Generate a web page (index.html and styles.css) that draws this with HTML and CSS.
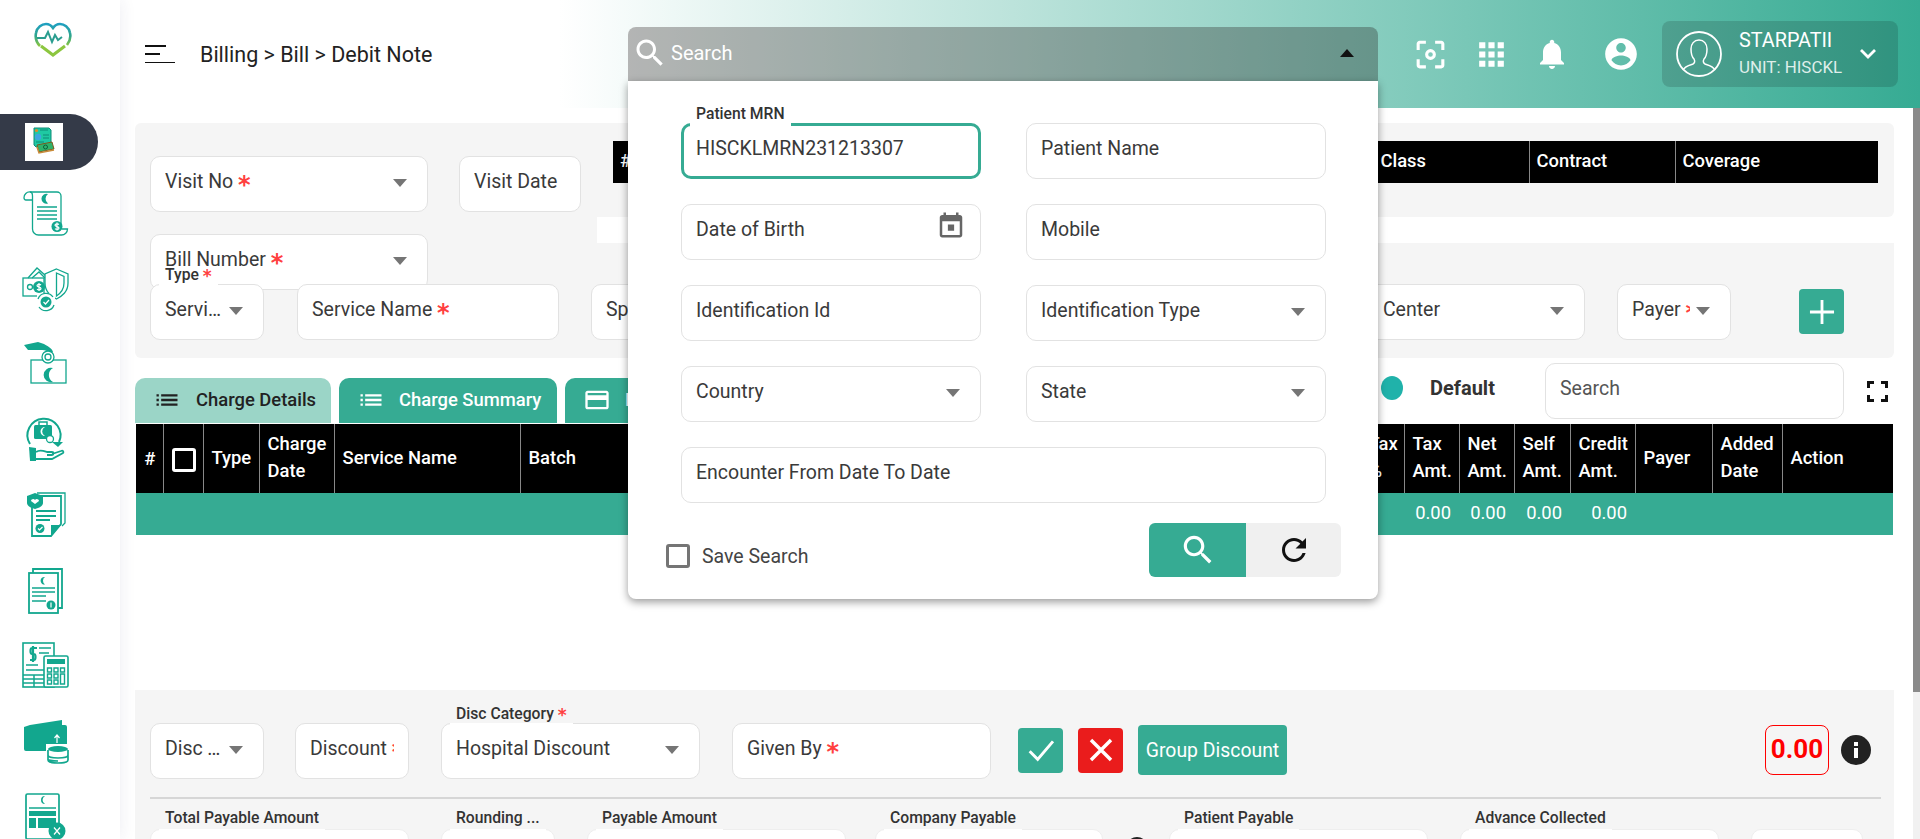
FILE: index.html
```html
<!DOCTYPE html>
<html lang="en">
<head>
<meta charset="utf-8">
<title>Billing - Debit Note</title>
<link rel="stylesheet" href="styles.css">
</head>
<body>
<svg class="sprite" aria-hidden="true">
  <symbol id="i-search" viewBox="0 0 24 24"><path d="M15.5 14h-.79l-.28-.27C15.41 12.59 16 11.11 16 9.5 16 5.91 13.09 3 9.5 3S3 5.91 3 9.5 5.91 16 9.5 16c1.61 0 3.09-.59 4.23-1.57l.27.28v.79l5 4.99L20.49 19l-4.99-5zm-6 0C7.01 14 5 11.99 5 9.5S7.01 5 9.5 5 14 7.01 14 9.5 11.99 14 9.5 14z"/></symbol>
  <symbol id="i-list" viewBox="0 0 24 24"><path d="M3 13h2v-2H3v2zm0 4h2v-2H3v2zm0-8h2V7H3v2zm4 4h14v-2H7v2zm0 4h14v-2H7v2zM7 7v2h14V7H7z"/></symbol>
</svg>
<div class="app">
  <aside class="sidebar">
    <svg class="logo" viewBox="0 0 38 35" fill="none">
      <defs><linearGradient id="lg" x1="0" y1="0" x2="0" y2="1"><stop offset="0" stop-color="#1f9fc0"/><stop offset=".55" stop-color="#2fa58c"/><stop offset="1" stop-color="#8cc63f"/></linearGradient></defs>
      <path d="M6 24C2 20 1 16 2 11 3 5 8 2 12 2c3 0 5 1 7 4 2-3 4-4 7-4 4 0 9 3 10 9 1 4 0 8-3 12" stroke="url(#lg)" stroke-width="2.6"/>
      <path d="M3 16h8l3-6 4 10 3-7 3 5 4-3" stroke="#2a9d8f" stroke-width="2"/>
      <path d="M7 24l12 9 12-9" stroke="#8cc63f" stroke-width="3"/>
    </svg>
    <div class="nav-active">
      <span class="nav-active-box">
        <svg viewBox="0 0 38 38" class="active-ic">
          <path d="M9 5h15l2 2v15l-15 2-2-2z" fill="#1fc9a3" stroke="#0f8b76"/>
          <circle cx="11.500" cy="7.500" r="1.600" fill="#e08a2c"/>
          <circle cx="13" cy="14" r="3.200" fill="#3da5e0"/>
          <path d="M15 7h8M18 12h6M18 15h6M11 19h8" stroke="#0f8b76" fill="none"/>
          <path d="M12 22l15-3 2 7-15 3z" fill="#2fb36a" stroke="#7a5a1e"/>
          <path d="M12 24l2 6 15-3" fill="none" stroke="#c98b3a" stroke-width="1.500"/>
          <circle cx="20.500" cy="24" r="2" fill="none" stroke="#0b5f3a"/>
        </svg>
      </span>
    </div>
    <nav class="nav-list">
      <svg class="nav-ic" viewBox="0 0 48 48">
        <path d="M8 3h27a4 4 0 0 1 4 4v29"/><path d="M8 3a5.500 5.500 0 0 0-6 5.500c0 1.500 1 2.500 2 2.500h6"/><path d="M8 3c2 0 2.500 2 2.500 4v33a6 6 0 0 0 6 6h23a6 6 0 0 0 6-6h-6"/>
        <path class="f" d="M26 5a5 5 0 1 0 0 9.500 5.800 5.800 0 0 1 0-9.500z"/>
        <path d="M15 18h20M15 22h20M15 26h20M15 30h20"/>
        <circle class="f" cx="35" cy="37.500" r="5.500"/><path class="ws" d="M37 35.500c-1-1-4-.8-4 .8s4 1 4 2.800-3 1.600-4 .6M35 33.500v8"/>
      </svg>
      <svg class="nav-ic" viewBox="0 0 48 48">
        <path d="M6 13L15 3l9 8M10 13l7-6 6 6"/><rect x="1" y="13" width="21" height="18"/>
        <circle cx="8" cy="22" r="2.500"/><circle class="f" cx="17" cy="22" r="6"/><path class="ws" d="M19 20c-1-1-4-.8-4 .8s4 1 4 2.800-3 1.600-4 .6M17 18v8"/>
        <path fill="#fff" d="M34.500 4L46 9v9c0 9-6 13-11.500 16C29 31 23 27 23 18V9z"/><path d="M34.500 8L42 11.500V18c0 6-3 10-7.500 13zM34.500 8v23"/>
        <path fill="#fff" stroke="none" d="M15 28h18v18H15z"/><path d="M16 34a8.500 8.500 0 0 1 15-2M32 40a8.500 8.500 0 0 1-15 2"/><circle class="f" cx="24" cy="37" r="5.500"/><path class="ws" d="M21.500 37l2 2 3.500-4"/>
      </svg>
      <svg class="nav-ic" viewBox="0 0 48 48">
        <rect x="9" y="20" width="35" height="23"/>
        <path class="f" d="M2 5L16 2l6 2c3 2 8 4 9 8h-5c-2-2-5-2-8-2H6z"/>
        <circle fill="#fff" stroke="#12a78e" cx="26" cy="17" r="6"/><circle cx="26" cy="17" r="3"/>
        <path class="f" d="M31 28a7.300 7.300 0 1 0 0 14 8 8 0 0 1 0-14z"/>
      </svg>
      <svg class="nav-ic" viewBox="0 0 48 48">
        <path stroke-width="2" d="M8 28A16.500 16.500 0 1 1 37 26"/><path class="f" d="M30 26h11l-5 5z"/>
        <rect class="f" x="12" y="9" width="18" height="14" rx="1.500"/><path d="M17 9V6h8v3" stroke-width="1.500"/>
        <path class="wf" d="M23 11a4.500 4.500 0 1 0 0 9 5 5 0 0 1 0-9z"/>
        <circle fill="#fff" cx="28" cy="23" r="3.500"/>
        <path class="f" d="M7 31l7 1v13H8z"/><path stroke-width="1.800" d="M14 36c4-3 8-1 11 0h5c2 0 2 3 0 3h-5M30 38l9-3c2-1 3 1 2 2l-11 6H14"/>
      </svg>
      <svg class="nav-ic" viewBox="0 0 48 48">
        <path d="M15 2h28v30l-3 3"/><path stroke-width="1.800" d="M12 5h27v28L29 45H10V14"/>
        <path class="f" d="M29 45V34h10z"/>
        <path stroke-width="1.800" d="M14 20h20M14 25h20M14 29h14"/>
        <path class="f" d="M13 2l8 3v7c0 3-4 5-8 6-4-1-8-3-8-6V5z"/><path class="wf" d="M13 13l-4-3c0-2 3-3 4-1 1-2 4-1 4 1z"/>
        <circle class="f" cx="18" cy="37.500" r="4.500"/><path class="ws" d="M16 37.500l1.500 1.500 3-3"/>
      </svg>
      <svg class="nav-ic" viewBox="0 0 48 48">
        <path stroke-width="1.800" d="M11 6V2h29v39h-4"/><rect x="7" y="6" width="29" height="40" fill="#fff" stroke-width="1.800"/>
        <path class="f" d="M23 10a3.800 3.800 0 1 0 0 7.500 4.500 4.500 0 0 1 0-7.500z"/>
        <path stroke-width="1.600" d="M10 21h23M10 25h23M10 29h14M10 34h14"/>
        <circle class="f" cx="29" cy="38" r="4.500"/><path class="ws" d="M29 35.500v5"/>
      </svg>
      <svg class="nav-ic" viewBox="0 0 48 48">
        <rect x="1" y="1" width="31" height="44" stroke-width="1.600"/>
        <path stroke-width="2.200" d="M15 6h-5c-2 0-2 6 0 6h2c2 0 2 6 0 6H8M11 4v16"/>
        <path stroke-width="1.500" d="M17 6h12M17 11h10M4 23h12M4 28h20"/>
        <path stroke-width="1.500" d="M1 33h21M1 37h21M1 41h21M12 33v12"/>
        <rect x="22" y="14" width="24" height="31" rx="1.500" fill="#fff" stroke-width="1.600"/>
        <rect class="f" x="25" y="17" width="18" height="5"/>
        <path stroke-width="1.400" d="M25.500 26h4v4h-4zM32 26h4v4h-4zM38.500 26h4v4h-4zM25.500 32h4v4h-4zM32 32h4v4h-4zM38.500 32h4v10h-4zM25.500 38h4v4h-4zM32 38h4v4h-4z"/>
      </svg>
      <svg class="nav-ic" viewBox="0 0 48 48">
        <path class="f" d="M8 7L40 2v5h3a2 2 0 0 1 2 2v24H4a2 2 0 0 1-2-2V9z"/>
        <path class="ws" d="M35 25v-8M32.500 20l2.500-3 2.500 3"/>
        <path fill="#fff" stroke="none" d="M24 26h24v20H24z"/>
        <ellipse class="f" cx="36" cy="31" rx="10" ry="3"/><path stroke-width="1.700" d="M26 32v10c0 2 4 3 10 3s10-1 10-3V32M26 37c0 2 4 3 10 3s10-1 10-3M26 41c0 1 4 2 10 2"/>
      </svg>
      <svg class="nav-ic" viewBox="0 0 48 48">
        <rect x="4" y="1" width="33" height="45" rx="1.500" stroke-width="1.700"/>
        <path class="f" d="M23 3a3.800 3.800 0 1 0 0 8 4.500 4.500 0 0 1 0-8z"/>
        <path stroke-width="1.500" d="M7 15h27"/>
        <path class="f" d="M7 18h27v5H7zM7 25h7v10H7zM16 25h18v10H16z"/>
        <circle class="f" cx="35" cy="38" r="8.500" stroke="#fff"/><path class="ws" stroke-width="2" d="M32 34.500l6 7M38 34.500l-6 7"/>
      </svg>
    </nav>
  </aside>

  <div class="main">
    <header class="topbar">
      <div class="hamburger"><span class="ham-a"></span><span class="ham-b"></span><span class="ham-c"></span></div>
      <div class="crumbs">Billing &gt; Bill &gt; Debit Note</div>
      <div class="global-search">
        <div class="search-bar">
          <svg class="search-ic" viewBox="0 0 24 24"><use href="#i-search"/></svg>
          <span class="search-text">Search</span>
          <span class="caret-up"></span>
        </div>
        <div class="search-panel">
          <div class="search-grid">
            <div class="field focus"><label class="float">Patient MRN</label><span class="val">HISCKLMRN231213307</span></div>
            <div class="field"><span class="val">Patient Name</span></div>
            <div class="field"><span class="val">Date of Birth</span>
              <svg class="cal" viewBox="0 0 24 24"><path d="M19 4h-1V2h-2v2H8V2H6v2H5c-1.110 0-1.990.9-1.990 2L3 20c0 1.100.89 2 2 2h14c1.100 0 2-.9 2-2V6c0-1.100-.9-2-2-2zm0 16H5V9h14v11zM9.500 11.500h5v5h-5z"/></svg>
            </div>
            <div class="field"><span class="val">Mobile</span></div>
            <div class="field"><span class="val">Identification Id</span></div>
            <div class="field"><span class="val">Identification Type</span><span class="caret"></span></div>
            <div class="field"><span class="val">Country</span><span class="caret"></span></div>
            <div class="field"><span class="val">State</span><span class="caret"></span></div>
            <div class="field span-2"><span class="val">Encounter From Date To Date</span></div>
          </div>
          <div class="search-foot">
            <label class="save"><span class="save-box"></span><span>Save Search</span></label>
            <div class="foot-btns">
              <button class="btn-go"><svg viewBox="0 0 24 24"><use href="#i-search"/></svg></button>
              <button class="btn-reset"><svg viewBox="0 0 24 24"><path d="M17.650 6.350C16.200 4.900 14.210 4 12 4c-4.420 0-7.990 3.580-7.990 8s3.570 8 7.990 8c3.730 0 6.840-2.550 7.730-6h-2.080c-.82 2.330-3.040 4-5.650 4-3.310 0-6-2.690-6-6s2.690-6 6-6c1.660 0 3.140.69 4.220 1.780L13 11h7V4l-2.350 2.350z"/></svg></button>
            </div>
          </div>
        </div>
      </div>
      <div class="top-icons">
        <svg class="ti ti-focus" viewBox="0 0 24 24"><path d="M5 15H3v4c0 1.100.9 2 2 2h4v-2H5v-4zM5 5h4V3H5c-1.100 0-2 .9-2 2v4h2V5zm14-2h-4v2h4v4h2V5c0-1.100-.9-2-2-2zm0 16h-4v2h4c1.100 0 2-.9 2-2v-4h-2v4z"/><path fill-rule="evenodd" d="M12 8.500a3.500 3.500 0 1 0 0 7 3.500 3.500 0 0 0 0-7zm0 2a1.500 1.500 0 1 1 0 3 1.500 1.500 0 0 1 0-3z"/></svg>
        <svg class="ti ti-apps" viewBox="0 0 24 24"><path d="M4 8h4V4H4v4zm6 12h4v-4h-4v4zm-6 0h4v-4H4v4zm0-6h4v-4H4v4zm6 0h4v-4h-4v4zm6-10v4h4V4h-4zm-6 4h4V4h-4v4zm6 6h4v-4h-4v4zm0 6h4v-4h-4v4z"/></svg>
        <svg class="ti ti-bell" viewBox="0 0 24 24"><path d="M12 22c1.100 0 2-.9 2-2h-4c0 1.100.89 2 2 2zm6-6v-5c0-3.070-1.640-5.640-4.500-6.320V4c0-.83-.67-1.500-1.500-1.500s-1.500.67-1.500 1.500v.68C7.630 5.360 6 7.920 6 11v5l-2 2v1h16v-1l-2-2z"/></svg>
        <svg class="ti ti-acct" viewBox="0 0 24 24"><path d="M12 2C6.480 2 2 6.480 2 12s4.480 10 10 10 10-4.480 10-10S17.520 2 12 2zm0 3c1.660 0 3 1.340 3 3s-1.340 3-3 3-3-1.340-3-3 1.340-3 3-3zm0 14.200c-2.500 0-4.710-1.280-6-3.220.03-1.990 4-3.080 6-3.080 1.990 0 5.970 1.090 6 3.080-1.290 1.940-3.500 3.220-6 3.220z"/></svg>
      </div>
      <div class="user-box">
        <svg class="avatar" viewBox="0 0 46 46" fill="none" stroke="#fff"><circle cx="23" cy="23" r="22" stroke-width="1.800"/><path stroke-width="1.500" d="M7 39c2-4 7-5 10-6 2-1 2-3 1-5-2-2-3-6-3-10 0-5 3-9 8-9s8 4 8 9c0 4-1 8-3 10-1 2-1 4 1 5 3 1 8 2 10 6"/></svg>
        <div class="user-text"><div class="user-name">STARPATII</div><div class="user-unit">UNIT: HISCKL</div></div>
        <svg class="chev" viewBox="0 0 18 12" fill="none" stroke="#fff" stroke-width="2.800"><path d="M2 2l7 7 7-7"/></svg>
      </div>
    </header>

    <div class="content">
      <section class="visit-section">
        <div class="visit-col">
          <div class="visit-row">
            <div class="field w-visit"><span class="val">Visit No <b class="req">*</b></span><span class="caret"></span></div>
            <div class="field w-date"><span class="val">Visit Date</span></div>
          </div>
          <div class="field w-visit bill"><span class="val">Bill Number <b class="req">*</b></span><span class="caret"></span></div>
        </div>
        <div class="visit-table-wrap">
          <table class="dark-table visit-table">
            <colgroup><col class="vc-a"><col class="vc-b"><col class="vc-c"><col class="vc-d"><col class="vc-e"></colgroup>
            <tr><th>#</th><th>Encounter</th><th>Class</th><th>Contract</th><th>Coverage</th></tr>
          </table>
        </div>
      </section>

      <section class="service-panel">
        <div class="field w-type"><label class="float">Type <b class="req">*</b></label><span class="val ell">Service</span><span class="caret"></span></div>
        <div class="field w-service"><span class="val">Service Name <b class="req">*</b></span></div>
        <div class="field w-spec"><span class="val">Specialization</span></div>
        <div class="field w-doc"><span class="val">Doctor</span></div>
        <div class="field w-center"><span class="val">Cost&nbsp; Center</span><span class="caret"></span></div>
        <div class="field w-type"><span class="val clip">Payer <b class="req">*</b></span><span class="caret"></span></div>
        <button class="btn-add"><svg viewBox="0 0 24 24" fill="none" stroke="#fff" stroke-width="2"><path d="M12 3.500v17M3.500 12h17"/></svg></button>
      </section>

      <div class="tool-row">
        <button class="tab tab-light"><svg viewBox="0 0 24 24"><use href="#i-list"/></svg><span>Charge Details</span></button>
        <button class="tab tab-summary"><svg viewBox="0 0 24 24"><use href="#i-list"/></svg><span>Charge Summary</span></button>
        <button class="tab tab-third"><svg viewBox="0 0 24 24"><path d="M20 4H4c-1.110 0-1.990.89-1.990 2L2 18c0 1.110.89 2 2 2h16c1.110 0 2-.89 2-2V6c0-1.110-.89-2-2-2zm0 14H4v-6h16v6zm0-10H4V6h16v2z"/></svg><span>Payment</span></button>
        <div class="tool-right">
          <span class="dot"></span>
          <span class="default-text">Default</span>
          <div class="field w-tsearch"><span class="val muted">Search</span></div>
          <svg class="full" viewBox="0 0 21 21" fill="none" stroke="#111" stroke-width="3"><path d="M1.500 7V1.500H7M14 1.500h5.500V7M1.500 14v5.500H7M14 19.500h5.500V14"/></svg>
        </div>
      </div>

      <table class="dark-table charge-table">
        <colgroup>
          <col class="c1"><col class="c2"><col class="c3"><col class="c4"><col class="c5"><col class="c6"><col class="c7"><col class="c8"><col class="c9"><col class="c10"><col class="c11"><col class="c12"><col class="c13"><col class="c14"><col class="c15"><col class="c16"><col class="c17"><col class="c18"><col class="c19"><col class="c20">
        </colgroup>
        <thead>
          <tr>
            <th class="ctr">#</th><th class="ctr"><span class="th-check"></span></th><th>Type</th><th>Charge Date</th><th>Service Name</th><th>Batch</th><th>Expiry</th><th>Qty</th><th>Rate</th><th>Disc %</th><th>Disc Amt.</th><th>Amount</th><th>Tax %</th><th>Tax Amt.</th><th>Net Amt.</th><th>Self Amt.</th><th>Credit Amt.</th><th>Payer</th><th>Added Date</th><th>Action</th>
          </tr>
        </thead>
        <tbody>
          <tr class="total-row"><td colspan="13"></td><td>0.00</td><td>0.00</td><td>0.00</td><td>0.00</td><td colspan="3"></td></tr>
        </tbody>
      </table>

      <section class="discount-panel">
        <div class="disc-row">
          <div class="field w-disc"><span class="val ell">Disc Type</span><span class="caret"></span></div>
          <div class="field w-discount"><span class="val">Discount <b class="req">*</b></span></div>
          <div class="field w-cat"><label class="float">Disc Category <b class="req">*</b></label><span class="val">Hospital Discount</span><span class="caret"></span></div>
          <div class="field w-cat"><span class="val">Given By <b class="req">*</b></span></div>
          <button class="btn-sq btn-ok"><svg viewBox="0 0 24 24" fill="none" stroke="#fff" stroke-width="2.200"><path d="M3.500 13l6 6L21 5.500"/></svg></button>
          <button class="btn-sq btn-no"><svg viewBox="0 0 24 24" fill="none" stroke="#fff" stroke-width="2.600"><path d="M4.500 4.500l15 15M19.500 4.500l-15 15"/></svg></button>
          <button class="btn-group">Group Discount</button>
          <div class="balance">0.00</div>
          <svg class="info" viewBox="0 0 30 30"><circle cx="15" cy="15" r="15" fill="#222"/><path fill="#fff" d="M13 13h4v10h-4zM13 7h4v4h-4z"/></svg>
        </div>
        <div class="pay-row">
          <div class="field w-cat pay"><label class="float">Total Payable Amount</label></div>
          <div class="field w-round pay"><label class="float">Rounding ...</label></div>
          <div class="field w-cat pay"><label class="float">Payable Amount</label></div>
          <div class="field w-company pay"><label class="float">Company Payable</label></div>
          <span class="mini-info"></span>
          <div class="field w-cat pay"><label class="float">Patient Payable</label></div>
          <div class="field w-cat pay"><label class="float">Advance Collected</label></div>
          <div class="field w-last pay"></div>
        </div>
      </section>
    </div>
    <div class="rail"><div class="thumb"></div></div>
  </div>
</div>
</body>
</html>
```

FILE: styles.css
```css
* { box-sizing: border-box; }
html, body { margin: 0; height: 839px; overflow: hidden; }
body { font-family: Roboto, "Liberation Sans", sans-serif; font-size: 18px; color: #333; background: #fff; }
.sprite { display: none; }
button { font-family: inherit; border: 0; cursor: pointer; padding: 0; }

.app { display: flex; height: 839px; }

/* sidebar */
.sidebar { width: 120px; flex: none; background: #fff; position: relative; z-index: 3; padding-top: 22px; box-shadow: 0 0 16px rgba(40, 40, 110, .09); }
.logo { display: block; width: 38px; height: 35px; margin-left: 34px; }
.nav-active { width: 98px; height: 56px; margin-top: 57px; background: #343a48; border-radius: 0 28px 28px 0; padding: 9px 0 0 25px; }
.nav-active-box { display: block; width: 38px; height: 38px; background: #fff; }
.active-ic { display: block; width: 38px; height: 38px; }
.nav-list { display: flex; flex-direction: column; gap: 27.5px; margin: 19px 0 0 22px; }
.nav-ic { display: block; width: 48px; height: 48px; fill: none; stroke: #12a78e; stroke-width: 1.3; flex: none; }
.nav-ic .f { fill: #12a78e; stroke: none; }
.nav-ic .wf { fill: #fff; stroke: none; }
.nav-ic .ws { stroke: #fff; fill: none; stroke-width: 1.2; }

/* main */
.main { flex: 1; min-width: 0; position: relative; overflow: hidden; }
.topbar { height: 108px; display: flex; align-items: center; padding: 0 22px 0 25px; background: linear-gradient(to right, #fff 24.4%, #36ab93 100%); }
.hamburger { width: 30px; display: flex; flex-direction: column; gap: 6.5px; flex: none; }
.hamburger span { display: block; height: 1.5px; background: #111; }
.hamburger .ham-a { width: 21px; }
.hamburger .ham-b { width: 15px; height: 2px; }
.hamburger .ham-c { width: 30px; }
.crumbs { margin-left: 25px; width: 232px; flex: none; white-space: nowrap; color: #222; font-size: 21.5px; }

.global-search { position: relative; width: 750px; margin-left: 196px; flex: none; }
.search-bar { height: 54px; display: flex; align-items: center; background: rgba(30, 20, 20, .3); border-radius: 8px 8px 0 0; padding: 0 24px 2px 3.5px; color: #fff; }
.search-ic { width: 36px; height: 36px; fill: #fff; flex: none; }
.search-text { margin-left: 3.5px; flex: 1; font-size: 20px; }
.caret-up { width: 0; height: 0; border: 7px solid transparent; border-top: 0; border-bottom: 8px solid #111; }
.search-panel { position: absolute; left: 0; right: 0; top: 54px; z-index: 20; height: 518px; background: #fff; border-radius: 0 0 8px 8px; padding: 42px 52px 0 53px; box-shadow: 0 3px 8px rgba(0, 0, 0, .4); }
.search-grid { display: grid; grid-template-columns: 300px 300px; column-gap: 45px; row-gap: 25px; }
.span-2 { grid-column: span 2; }
.search-foot { display: flex; justify-content: space-between; margin: 20px -15px 0 -15px; }
.save { display: flex; align-items: center; gap: 12px; margin-top: 21px; height: 24px; font-size: 19.5px; color: #444; }
.save-box { width: 24px; height: 24px; border: 3px solid #757575; border-radius: 3px; }
.foot-btns { display: flex; }
.btn-go { width: 97px; height: 54px; background: #36ab93; border-radius: 6px 0 0 6px; }
.btn-go svg { width: 38px; height: 38px; fill: #fff; display: block; margin: 0 auto; }
.btn-reset { width: 95px; height: 54px; background: #f0f0f0; border-radius: 0 6px 6px 0; }
.btn-reset svg { width: 36px; height: 36px; fill: #111; display: block; margin: 0 auto; }
.cal { width: 30px; height: 30px; fill: #666; flex: none; margin: -8.5px -6px 0 0; }

.top-icons { display: flex; align-items: center; margin-left: 34px; flex: none; }
.ti { fill: #fff; display: block; flex: none; }
.ti-focus { width: 37px; height: 37px; }
.ti-apps { width: 37px; height: 37px; margin-left: 24px; }
.ti-bell { width: 36px; height: 36px; margin-left: 24px; }
.ti-acct { width: 38px; height: 38px; margin-left: 32px; }
.user-box { width: 236px; height: 66px; margin-left: 22px; flex: none; background: rgba(0, 0, 0, .14); border-radius: 8px; display: flex; align-items: center; padding-left: 14px; color: #fff; }
.avatar { width: 46px; height: 46px; flex: none; }
.user-text { margin-left: 17px; width: 120px; flex: none; }
.user-name { font-size: 19.8px; line-height: 27px; }
.user-unit { font-size: 16.9px; line-height: 27px; color: #dfeeea; }
.chev { width: 18px; height: 12px; flex: none; }

/* generic field */
.field { height: 56px; flex: none; display: flex; align-items: flex-start; position: relative; background: #fff; border: 1px solid #e2e2e2; border-radius: 10px; padding: 13px 20px 0 14px; }
.val { flex: 1; min-width: 0; line-height: 24px; font-size: 19.5px; color: #3a3a3a; white-space: nowrap; overflow: hidden; }
.ell { text-overflow: ellipsis; margin-right: 5px; }
.clip { margin-right: 6px; }
.muted { color: #555; }
.req { color: #ff4040; font-family: "DejaVu Sans", sans-serif; font-weight: 700; font-size: 24px; line-height: 20px; vertical-align: -5px; }
.caret { width: 0; height: 0; flex: none; margin-top: 9px; border: 7px solid transparent; border-bottom: 0; border-top: 8px solid #757575; }
.float { position: absolute; left: 8px; top: -20px; padding: 0 6px; height: 28px; line-height: 20px; font-size: 15.7px; font-weight: 500; color: #333; white-space: nowrap; background: linear-gradient(to bottom, transparent 19px, #fff 19px); }
.float .req { font-size: 17px; vertical-align: -2px; }
.focus { border: 3px solid #36ab93; padding: 11px 18px 0 12px; }
.focus .float { left: 6px; top: -22px; }

/* visit */
.content { padding: 15px 26px 0 15px; }
.visit-section { display: flex; align-items: flex-start; }
.visit-col { width: 462px; height: 120px; flex: none; background: #f5f5f5; border-radius: 6px 0 0 0; padding: 33px 0 0 15px; position: relative; z-index: 1; }
.visit-row { display: flex; gap: 31px; }
.w-visit { width: 278px; }
.w-date { width: 122px; }
.bill { margin-top: 22px; }
.visit-table-wrap { flex: 1; height: 94px; background: #f5f5f5; border-radius: 0 6px 6px 0; padding: 18px 16px 0; }
.dark-table { border-collapse: collapse; table-layout: fixed; width: 100%; background: #000; color: #fff; }
.dark-table th { font-weight: 500; text-align: left; vertical-align: middle; padding: 0 8px 3px; border-right: 1px solid #888; font-size: 18.4px; line-height: 27px; }
.dark-table th:last-child { border-right: 0; }
.visit-table th { height: 42px; padding-left: 7px; }
.vc-a { width: 400px; }
.vc-b { width: 360px; }
.vc-c { width: 156px; }
.vc-d { width: 146px; }
.vc-e { width: 203px; }

/* service panel */
.service-panel { height: 115px; background: #f5f5f5; border-radius: 0 0 6px 6px; padding: 41px 0 0 15px; display: flex; align-items: flex-start; gap: 32px; }
.service-panel .field { z-index: 2; }
.w-type { width: 114px; }
.w-service { width: 262px; margin-left: 1px; }
.w-spec { width: 241px; }
.w-doc { width: 422px; }
.w-center { width: 267px; }
.btn-add { width: 45px; height: 45px; margin: 5px 0 0 36px; background: #36ab93; border-radius: 4px; flex: none; }
.btn-add svg { display: block; width: 34px; height: 34px; margin: 0 auto; }

/* tool row */
.tool-row { height: 61px; margin-top: 5px; padding-bottom: 1px; display: flex; align-items: flex-end; gap: 8px; }
.tab { height: 45px; flex: none; display: flex; align-items: center; padding: 0 0 2px 18px; gap: 14px; background: #36ab93; color: #fff; font-size: 18.4px; font-weight: 500; border-radius: 10px 10px 0 0; white-space: nowrap; overflow: hidden; }
.tab svg { width: 28px; height: 28px; fill: currentColor; flex: none; }
.tab-light { width: 196px; background: #9bd5c7; color: #222; gap: 15px; }
.tab-summary { width: 218px; }
.tab-third { width: 230px; }
.tool-right { margin-left: auto; align-self: flex-start; display: flex; align-items: center; height: 56px; padding-right: 6px; }
.dot { width: 22px; height: 24px; border-radius: 50%; background: #20b2aa; margin-top: -6px; }
.default-text { margin: -7px 0 0 27px; width: 115px; font-weight: 700; font-size: 20px; color: #333; }
.w-tsearch { width: 299px; }
.full { width: 21px; height: 21px; margin: 0 0 0 23px; flex: none; }

/* charge table */
.charge-table { width: 1757px; margin-left: 1px; }
.charge-table th { height: 69px; }
.ctr { text-align: center !important; padding: 0 0 0 1px !important; }
.th-check { display: inline-block; width: 24px; height: 24px; border: 3px solid #fff; border-radius: 3px; vertical-align: middle; }
.total-row td { height: 42px; background: #36ab93; color: #fff; text-align: right; padding: 0 8px 4px; font-size: 18.4px; }
.c1 { width: 27px; } .c2 { width: 40px; } .c3 { width: 56px; } .c4 { width: 75px; } .c5 { width: 186px; }
.c6 { width: 230px; } .c7 { width: 100px; } .c8 { width: 80px; } .c9 { width: 90px; } .c10 { width: 90px; }
.c11 { width: 110px; } .c12 { width: 140px; } .c13 { width: 44px; }
.c14 { width: 55px; } .c15 { width: 55px; } .c16 { width: 56px; } .c17 { width: 65px; } .c18 { width: 77px; } .c19 { width: 70px; } .c20 { width: 111px; }

/* discount */
.discount-panel { margin-top: 155px; background: #f5f5f5; height: 200px; padding: 33px 13px 0 15px; }
.disc-row { display: flex; align-items: center; height: 56px; }
.w-disc { width: 114px; }
.w-discount { width: 114px; margin-left: 31px; padding-right: 14px; }
.w-cat { width: 259px; margin-left: 32px; }
.btn-sq { width: 45px; height: 45px; border-radius: 4px; flex: none; margin-bottom: 2px; }
.btn-sq svg { display: block; width: 32px; height: 32px; margin: 0 auto; }
.btn-ok { background: #36ab93; margin-left: 27px; }
.btn-no { background: #ea1c1c; margin-left: 15px; }
.btn-group { width: 149px; height: 50px; background: #36ab93; color: #fff; border-radius: 4px; margin: 0 0 2px 15px; font-size: 19.4px; flex: none; }
.balance { margin: 0 0 2px auto; width: 64px; height: 50px; border: 1px solid #f00; border-radius: 8px; color: #f00; font-weight: 700; font-size: 26px; line-height: 46px; text-align: center; flex: none; }
.info { width: 30px; height: 30px; margin: 0 10px 2px 12px; flex: none; }
.pay-row { display: flex; margin-top: 50px; position: relative; align-items: flex-start; }
.pay-row::before { content: ""; position: absolute; left: 0; right: 0; top: -32px; height: 2px; background: #d6d6d6; }
.pay-row .field:first-child { margin-left: 0; }
.pay { border-color: #eee; }
.pay .float { top: -22px; height: 30px; background: linear-gradient(to bottom, transparent 21px, #fff 21px); }
.w-round { width: 114px; margin-left: 32px; }
.w-company { width: 228px; margin-left: 29px; }
.mini-info { width: 22px; height: 22px; margin: 8px -11px 0 23px; background: #222; border-radius: 50%; flex: none; }
.w-last { width: 112px; margin-left: 32px; }

/* scrollbar */
.rail { position: absolute; right: 0; top: 108px; bottom: 0; width: 7px; background: #f1f1f1; }
.thumb { height: 584px; background: #8a8a8a; }
```
